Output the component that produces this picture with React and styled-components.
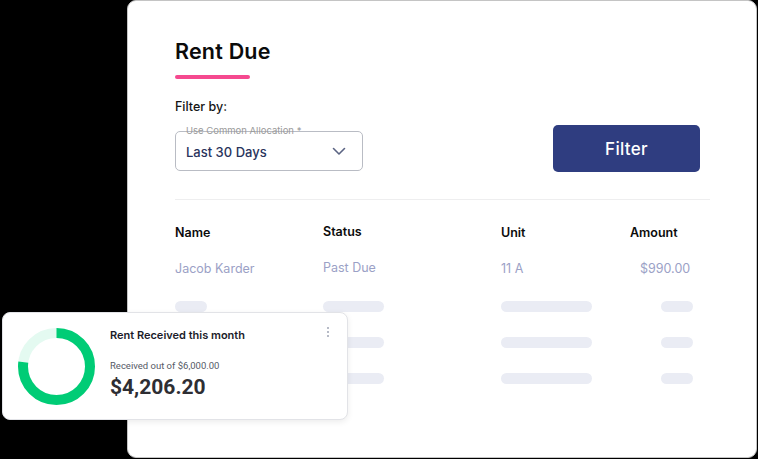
import React from "react";
import styled, { createGlobalStyle } from "styled-components";

const Global = createGlobalStyle`
  html, body { margin: 0; padding: 0; background: #000; }
  body { font-family: Inter, "Noto Sans", sans-serif; }
  * { box-sizing: border-box; }
`;

const Page = styled.div`
  position: relative;
  width: 758px;
  height: 459px;
  padding: 0 1px 1px 127px;
  background: #000;
  overflow: hidden;
`;

const MainCard = styled.div`
  height: 100%;
  background: #fff;
  border: 1px solid #c4c4c4;
  border-radius: 9px;
  padding: 37px 46px 0 47px;
  display: flex;
  flex-direction: column;
`;

const Title = styled.h1`
  margin: 0;
  font-size: 21.5px;
  line-height: 26px;
  font-weight: 600;
  color: #0b0b0b;
  letter-spacing: 0.2px;
`;

const Accent = styled.div`
  width: 75px;
  height: 4px;
  border-radius: 2px;
  background: #f5498f;
  margin-top: 11px;
`;

const FilterLabel = styled.div`
  margin-top: 19px;
  font-size: 12.5px;
  line-height: 18px;
  font-weight: 500;
  color: #151515;
`;

const FilterRow = styled.div`
  margin-top: 9px;
  display: flex;
  align-items: flex-end;
  justify-content: space-between;
  padding-right: 10px;
`;

const SelectBox = styled.div`
  position: relative;
  width: 188px;
  height: 40px;
  border: 1px solid #b9bcc4;
  border-radius: 5px;
  display: flex;
  align-items: center;
  justify-content: space-between;
  padding: 0 16px 0 10px;
  margin-bottom: 1px;
`;

const FloatLabel = styled.span`
  position: absolute;
  left: 10px;
  top: -7px;
  font-size: 9.5px;
  line-height: 12px;
  color: #9a9a9a;
  white-space: nowrap;
`;

const SelectValue = styled.span`
  font-size: 13px;
  font-weight: 500;
  color: #29335c;
  margin-top: 2px;
`;

const FilterButton = styled.button`
  width: 147px;
  height: 47px;
  border: none;
  border-radius: 5px;
  background: #2f3d80;
  color: #fff;
  font-family: inherit;
  font-size: 17px;
  font-weight: 500;
  letter-spacing: 0.3px;
`;

const Divider = styled.div`
  margin-top: 27px;
  height: 1px;
  background: #eeeeef;
`;

const Table = styled.div`
  margin-top: 24px;
  display: grid;
  grid-template-columns: 148px 178px 129px 1fr;
`;

const HeadCell = styled.div`
  font-size: 12.5px;
  font-weight: 600;
  line-height: 18px;
  color: #0b0b0b;
  margin-top: ${(p) => p.$dy || 0}px;
  padding-left: ${(p) => p.$pl || 0}px;
`;

const Cell = styled.div`
  margin-top: ${(p) => (p.$dy || 0) + 18}px;
  font-size: 12.5px;
  font-weight: 400;
  line-height: 18px;
  color: #9ba1c6;
  padding-left: ${(p) => p.$pl || 0}px;
`;

const BarCell = styled.div`
  height: 36px;
  display: flex;
  align-items: center;
  padding-left: ${(p) => p.$pl || 0}px;
  margin-top: ${(p) => (p.$first ? 10 : 0)}px;
`;

const Bar = styled.div`
  width: ${(p) => p.$w}px;
  height: 11px;
  border-radius: 6px;
  background: #eaecf4;
`;

const StatCard = styled.div`
  position: absolute;
  left: 2px;
  top: 312px;
  width: 346px;
  height: 108px;
  background: #fff;
  border: 1px solid #e2e3e7;
  border-radius: 8px;
  box-shadow: 0 2px 6px rgba(0, 0, 0, 0.08);
  display: flex;
  align-items: flex-start;
  padding: 14px 18px 0 14px;
`;

const Donut = styled.svg`
  flex: none;
  width: 79px;
  height: 79px;
`;

const StatText = styled.div`
  flex: 1;
  margin-left: 14px;
  padding-top: 1px;
  display: flex;
  flex-direction: column;
`;

const StatTitle = styled.div`
  font-size: 11px;
  line-height: 14px;
  font-weight: 600;
  color: #1b1c2a;
`;

const StatSub = styled.div`
  margin-top: 18px;
  font-family: Roboto, "Liberation Sans", sans-serif;
  font-size: 9.5px;
  line-height: 12px;
  color: #555a66;
`;

const StatAmount = styled.div`
  margin-top: 3px;
  font-family: Roboto, "Liberation Sans", sans-serif;
  font-size: 21px;
  line-height: 24px;
  font-weight: 700;
  color: #2e2e33;
`;

const Kebab = styled.div`
  flex: none;
  display: flex;
  flex-direction: column;
  gap: 2px;
`;

const Dot = styled.span`
  width: 2px;
  height: 2px;
  border-radius: 1px;
  background: #9fa4b4;
`;

const Chevron = () => (
  <svg width="14" height="9" viewBox="0 0 14 9" fill="none">
    <path d="M1.5 1.5 L7 7 L12.5 1.5" stroke="#5b6483" strokeWidth="1.6" strokeLinecap="round" strokeLinejoin="round" />
  </svg>
);

const bars = [
  [32, 61, 91, 32],
  [32, 61, 91, 32],
  [32, 61, 91, 32],
];

export default function App() {
  const r = 33.5;
  const c = 2 * Math.PI * r;
  const frac = 0.77;
  return (
    <>
      <Global />
      <Page>
        <MainCard>
          <Title>Rent Due</Title>
          <Accent />
          <FilterLabel>Filter by:</FilterLabel>
          <FilterRow>
            <SelectBox>
              <FloatLabel>Use Common Allocation *</FloatLabel>
              <SelectValue>Last 30 Days</SelectValue>
              <Chevron />
            </SelectBox>
            <FilterButton>Filter</FilterButton>
          </FilterRow>
          <Divider />
          <Table>
            <HeadCell>Name</HeadCell>
            <HeadCell $dy={-1}>Status</HeadCell>
            <HeadCell>Unit</HeadCell>
            <HeadCell>Amount</HeadCell>
            <Cell>Jacob Karder</Cell>
            <Cell $dy={-1}>Past Due</Cell>
            <Cell>11 A</Cell>
            <Cell $pl={10}>$990.00</Cell>
            {bars.map((row, i) =>
              row.map((w, j) => (
                <BarCell key={`${i}-${j}`} $first={i === 0} $pl={j === 3 ? 31 : 0}>
                  <Bar $w={w} />
                </BarCell>
              ))
            )}
          </Table>
        </MainCard>
        <StatCard>
          <Donut viewBox="0 0 79 79">
            <circle cx="39.5" cy="39.5" r={r} fill="none" stroke="#e4faf1" strokeWidth="10" />
            <circle
              cx="39.5"
              cy="39.5"
              r={r}
              fill="none"
              stroke="#00cc76"
              strokeWidth="10"
              strokeDasharray={`${c * frac} ${c}`}
              transform="rotate(-90 39.5 39.5)"
            />
          </Donut>
          <StatText>
            <StatTitle>Rent Received this month</StatTitle>
            <StatSub>Received out of $6,000.00</StatSub>
            <StatAmount>$4,206.20</StatAmount>
          </StatText>
          <Kebab>
            <Dot />
            <Dot />
            <Dot />
          </Kebab>
        </StatCard>
      </Page>
    </>
  );
}
